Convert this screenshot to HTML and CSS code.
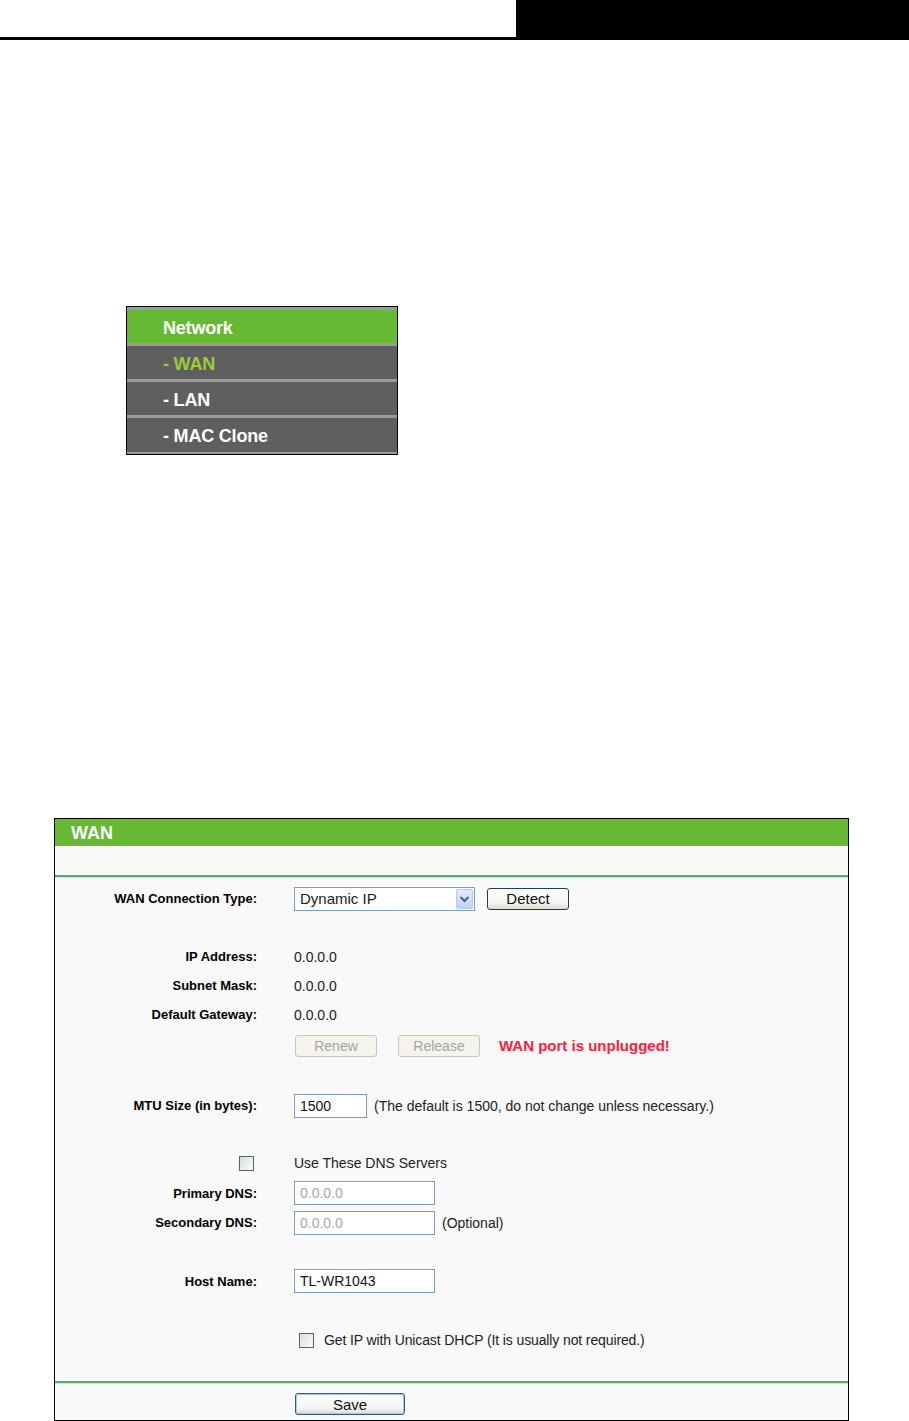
FILE: index.html
```html
<!DOCTYPE html>
<html lang="en">
<head>
<meta charset="utf-8">
<title>WAN</title>
<link rel="stylesheet" href="styles.css">
</head>
<body>
<header class="topbar">
  <div class="topbar-left"></div>
  <div class="topbar-right"></div>
</header>

<nav class="menu">
  <div class="menu-item menu-head">Network</div>
  <div class="menu-item menu-active">- WAN</div>
  <div class="menu-item">- LAN</div>
  <div class="menu-item">- MAC Clone</div>
</nav>

<section class="panel">
  <div class="panel-title">WAN</div>
  <div class="panel-blank"></div>
  <div class="rule"></div>
  <div class="form">
    <div class="row">
      <div class="lbl">WAN Connection Type:</div>
      <div class="val">
        <div class="select">
          <span class="select-text">Dynamic IP</span>
          <span class="select-arrow"><svg width="15" height="20" viewBox="0 0 15 20"><path d="M3.5 8 L7.5 12 L11.5 8" fill="none" stroke="#4a5f86" stroke-width="2"/></svg></span>
        </div>
        <button class="btn btn-detect">Detect</button>
      </div>
    </div>
    <div class="row"></div>
    <div class="row"><div class="lbl">IP Address:</div><div class="val">0.0.0.0</div></div>
    <div class="row"><div class="lbl">Subnet Mask:</div><div class="val">0.0.0.0</div></div>
    <div class="row"><div class="lbl">Default Gateway:</div><div class="val">0.0.0.0</div></div>
    <div class="row h33">
      <div class="lbl"></div>
      <div class="val">
        <button class="btn btn-off btn-renew">Renew</button>
        <button class="btn btn-off btn-release">Release</button>
        <span class="alert">WAN port is unplugged!</span>
      </div>
    </div>
    <div class="row"></div>
    <div class="row">
      <div class="lbl">MTU Size (in bytes):</div>
      <div class="val"><input class="field field-mtu" type="text" value="1500"><span class="note">(The default is 1500, do not change unless necessary.)</span></div>
    </div>
    <div class="row h28"></div>
    <div class="row h30">
      <div class="lbl"><span class="check check-dns"></span></div>
      <div class="val">Use These DNS Servers</div>
    </div>
    <div class="row h30">
      <div class="lbl">Primary DNS:</div>
      <div class="val"><input class="field field-ip field-off" type="text" value="0.0.0.0" disabled></div>
    </div>
    <div class="row">
      <div class="lbl">Secondary DNS:</div>
      <div class="val"><input class="field field-ip field-off" type="text" value="0.0.0.0" disabled><span class="note">(Optional)</span></div>
    </div>
    <div class="row"></div>
    <div class="row h30">
      <div class="lbl">Host Name:</div>
      <div class="val"><input class="field field-ip" type="text" value="TL-WR1043"></div>
    </div>
    <div class="row"></div>
    <div class="row h30">
      <div class="lbl"></div>
      <div class="val unicast"><span class="check check-unicast"></span>Get IP with Unicast DHCP (It is usually not required.)</div>
    </div>
    <div class="row h26"></div>
  </div>
  <div class="rule"></div>
  <div class="save-row">
    <button class="btn btn-save">Save</button>
  </div>
</section>
</body>
</html>
```
FILE: styles.css
```css
html, body {
  margin: 0;
  padding: 0;
  background: #ffffff;
  font-family: "Liberation Sans", Arial, sans-serif;
}

.topbar {
  display: flex;
  height: 40px;
}
.topbar-left {
  flex: 1;
  border-bottom: 3px solid #000;
}
.topbar-right {
  width: 393px;
  background: #000;
}

.menu {
  margin: 266px 0 0 126px;
  width: 272px;
  box-sizing: border-box;
  border: 1px solid #000;
  background: #5f5f5f;
  padding-bottom: 3px;
  box-shadow: inset 0 -2px 0 #9b9b9b;
}
.menu-item {
  height: 33px;
  border-top: 3px solid #9b9b9b;
  background: #5f5f5f;
  color: #ffffff;
  font-weight: bold;
  font-size: 18px;
  line-height: 36px;
  padding-left: 36px;
  letter-spacing: -0.2px;
}
.menu-head {
  background: #66b933;
}
.menu-active {
  color: #9acd32;
}

.panel {
  margin: 363px 0 0 54px;
  width: 795px;
  box-sizing: border-box;
  border: 1px solid #000;
  background: #f9f9f9;
}
.panel-title {
  height: 27px;
  line-height: 28px;
  background: #66b933;
  color: #fff;
  font-weight: bold;
  font-size: 18px;
  padding-left: 16px;
}
.panel-blank {
  height: 29px;
}
.rule {
  height: 2px;
  background: #65a178;
  box-shadow: 0 1px 0 #cfe3d4;
}
.form {
  padding-top: 7px;
}
.row {
  display: flex;
  align-items: center;
  height: 29px;
}
.h26 { height: 26px; }
.h28 { height: 28px; }
.h30 { height: 30px; }
.h33 { height: 33px; }

.lbl {
  flex: none;
  width: 202px;
  margin-right: 37px;
  display: flex;
  justify-content: flex-end;
  align-items: center;
  font-weight: bold;
  font-size: 13px;
  color: #000;
}
.val {
  display: flex;
  align-items: center;
  font-size: 14px;
  color: #222;
}
.unicast {
  letter-spacing: -0.12px;
}

.select {
  width: 181px;
  height: 24px;
  box-sizing: border-box;
  border: 1px solid #7f9db9;
  background: #fff;
  display: flex;
  align-items: center;
  justify-content: space-between;
  padding: 0 1px 0 5px;
}
.select-text {
  font-size: 15px;
  color: #1a1a1a;
}
.select-arrow {
  width: 17px;
  height: 20px;
  box-sizing: border-box;
  border: 1px solid #b6c9f0;
  border-radius: 2px;
  background: linear-gradient(#e3ebfc, #c1d3f6);
  display: flex;
  align-items: center;
  justify-content: center;
}

.btn {
  height: 22px;
  box-sizing: border-box;
  padding: 0;
  border: 1px solid #1f3d5e;
  border-radius: 3px;
  background: linear-gradient(#ffffff, #f4f4f0 70%, #dcdad0);
  font-family: "Liberation Sans", Arial, sans-serif;
  font-size: 15px;
  color: #111;
}
.btn-detect {
  width: 82px;
  margin-left: 12px;
}
.btn-off {
  width: 82px;
  font-size: 14px;
  color: #a5a5a0;
  border-color: #c9c7ba;
  background: #f4f3ec;
}
.btn-renew {
  margin-left: 1px;
}
.btn-release {
  margin-left: 21px;
}
.alert {
  margin-left: 19px;
  color: #ff2040;
  font-weight: bold;
  font-size: 15px;
}

.field {
  height: 24px;
  box-sizing: border-box;
  border: 1px solid #7f9db9;
  background: #fff;
  padding: 0 5px;
  font-family: "Liberation Sans", Arial, sans-serif;
  font-size: 14px;
  color: #111;
  margin: 0;
}
.field-mtu {
  width: 73px;
}
.field-ip {
  width: 141px;
}
.field-off {
  color: #a8a8a8;
}
.note {
  margin-left: 7px;
}

.check {
  display: inline-block;
  width: 15px;
  height: 15px;
  box-sizing: border-box;
  border: 1px solid #4f6474;
  background: linear-gradient(135deg, #dcdcd8, #fbfbfb);
}
.check-dns {
  margin-right: 3px;
}
.check-unicast {
  margin: 0 10px 0 5px;
}

.save-row {
  height: 37px;
  padding-left: 240px;
  padding-top: 10px;
  box-sizing: border-box;
}
.btn-save {
  width: 110px;
  border-color: #2b5a8a;
  box-shadow: inset 0 0 0 1px #a9c8ea;
}
```
